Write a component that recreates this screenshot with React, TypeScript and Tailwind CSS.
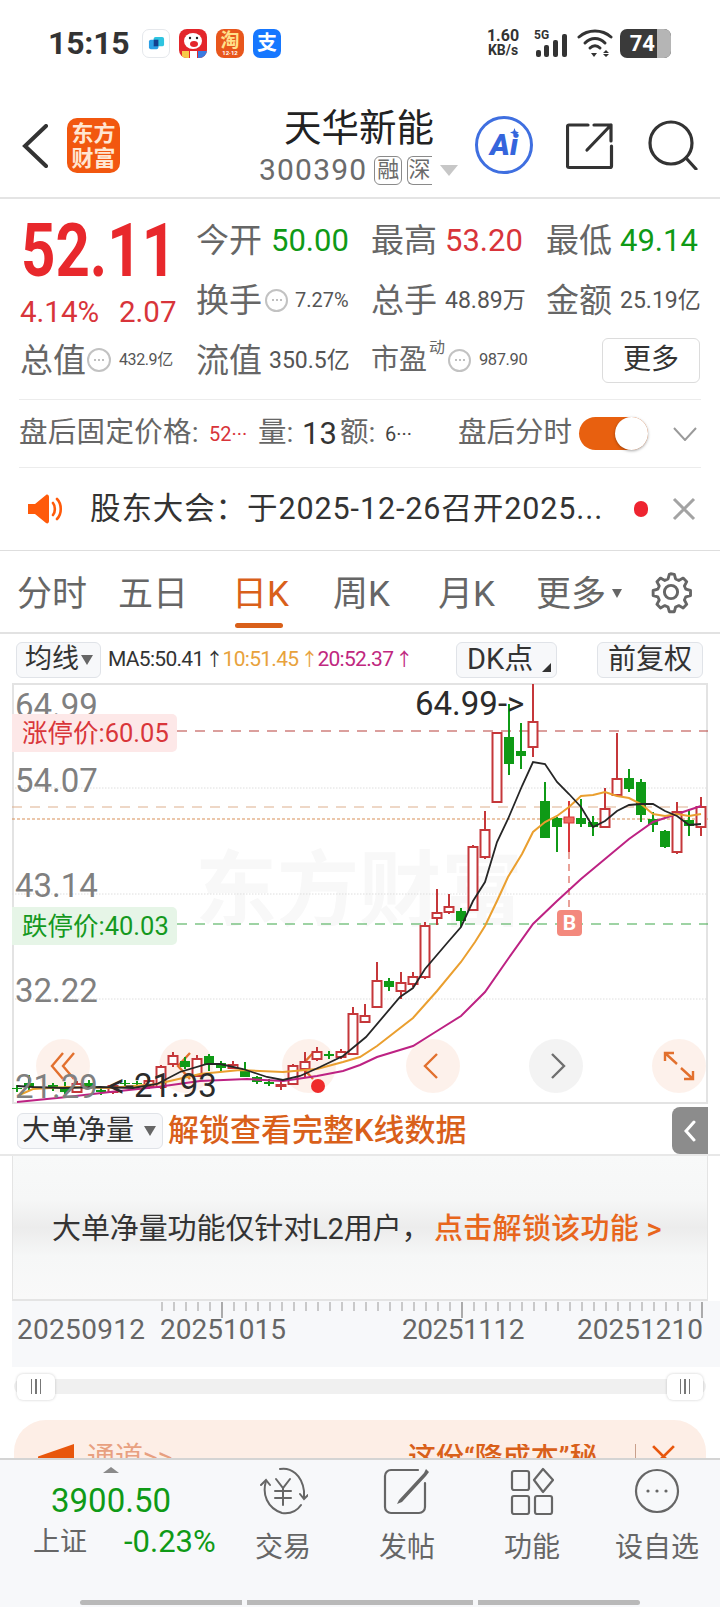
import type { ReactNode } from 'react'

const GREEN = 'text-[#0f9a16]'
const RED = 'text-[#d8343a]'

// x, wickTop, wickBottom, bodyTop, bodyBottom, up
type Candle = [number, number, number, number, number, boolean]

const candles: Candle[] = [
	[17, 1086, 1093, 1089, 1090, false],
	[29, 1076, 1092, 1084, 1088, false],
	[53, 1084, 1092, 1086, 1089, false],
	[65, 1083, 1095, 1089, 1093, false],
	[77, 1082, 1094, 1085, 1093, true],
	[89, 1081, 1090, 1084, 1087, false],
	[101, 1088, 1096, 1091, 1093, false],
	[113, 1085, 1095, 1087, 1093, true],
	[125, 1081, 1088, 1084, 1085, false],
	[137, 1082, 1088, 1084, 1085, false],
	[149, 1078, 1090, 1082, 1088, true],
	[161, 1066, 1090, 1068, 1088, true],
	[173, 1053, 1068, 1057, 1065, true],
	[185, 1058, 1070, 1062, 1068, false],
	[197, 1056, 1077, 1060, 1077, true],
	[209, 1055, 1072, 1057, 1065, false],
	[221, 1062, 1072, 1064, 1069, false],
	[233, 1062, 1070, 1066, 1069, true],
	[245, 1063, 1078, 1072, 1078, false],
	[257, 1077, 1085, 1078, 1083, false],
	[269, 1080, 1087, 1083, 1085, false],
	[281, 1082, 1091, 1086, 1087, true],
	[293, 1065, 1086, 1067, 1085, true],
	[305, 1053, 1078, 1063, 1070, true],
	[317, 1048, 1062, 1053, 1060, true],
	[329, 1052, 1060, 1055, 1057, false],
	[341, 1050, 1060, 1053, 1058, true],
	[353, 1008, 1055, 1015, 1055, true],
	[365, 1005, 1023, 1017, 1023, true],
	[377, 963, 1008, 982, 1008, true],
	[389, 979, 992, 982, 988, false],
	[401, 973, 1000, 984, 992, true],
	[413, 973, 988, 978, 985, true],
	[425, 923, 980, 927, 978, true],
	[437, 890, 926, 914, 919, true],
	[449, 895, 915, 908, 913, true],
	[461, 909, 928, 912, 922, false],
	[473, 846, 912, 848, 911, true],
	[485, 812, 860, 831, 858, true],
	[497, 734, 803, 734, 803, true],
	[509, 705, 776, 738, 765, false],
	[521, 724, 770, 752, 757, false],
	[533, 685, 758, 723, 748, true],
	[545, 783, 839, 802, 839, false],
	[557, 818, 853, 819, 828, false],
	[581, 800, 828, 819, 825, false],
	[593, 817, 837, 823, 828, false],
	[605, 789, 828, 810, 828, true],
	[617, 734, 797, 780, 796, true],
	[629, 770, 793, 779, 790, false],
	[641, 780, 823, 783, 816, false],
	[653, 813, 833, 820, 826, false],
	[665, 831, 849, 832, 848, false],
	[677, 803, 855, 813, 853, true],
	[689, 810, 837, 821, 827, false],
	[701, 798, 837, 808, 828, true],
]

const ma5 =
	'17,1087 33,1088 63,1089 100,1088 133,1089 157,1085 180,1073 207,1065 220,1065 243,1070 267,1078 283,1081 300,1077 320,1068 343,1057 360,1043 366,1038 400,998 413,989 425,970 448,943 461,928 473,902 485,883 497,843 508,820 522,787 533,763 545,765 557,783 569,795 581,808 593,828 605,822 617,812 629,806 641,805 653,805 665,812 677,817 689,826 701,825'
const ma10 =
	'17,1097 33,1090 67,1088 110,1089 157,1085 200,1075 240,1071 283,1073 317,1070 343,1063 360,1058 377,1047 413,1019 437,992 461,963 475,943 485,927 497,902 508,878 522,855 533,833 545,823 557,817 569,808 581,797 593,796 605,793 617,797 629,799 641,805 653,815 665,817 677,815 689,817 701,815'
const ma20 =
	'17,1103 67,1098 110,1093 157,1088 200,1082 247,1080 283,1082 317,1077 343,1072 360,1066 377,1058 413,1047 437,1032 461,1017 485,993 508,960 533,925 557,902 581,880 605,860 629,840 653,823 677,815 701,807'

const Circle = ({ x, gray, children }: { x: number; gray?: boolean; children: ReactNode }) => (
	<g>
		<circle cx={x} cy={1067} r={27} fill={gray ? '#f1f1f1' : '#fdefe8'} fillOpacity={0.85} />
		<g
			transform={`translate(${x} 1067)`}
			fill="none"
			stroke={gray ? '#6f6f6f' : '#e2702e'}
			strokeWidth={2.4}
		>
			{children}
		</g>
	</g>
)

const DotsBadge = ({ className }: { className: string }) => (
	<span
		className={`flex items-center justify-center rounded-full border-2 border-[#c2c2c2] text-[#a8a8a8] ${className}`}
	>
		<svg viewBox="0 0 12 4" className="w-[12px] h-[4px]">
			<circle cx="2" cy="2" r="1" fill="#aaa" />
			<circle cx="6" cy="2" r="1" fill="#aaa" />
			<circle cx="10" cy="2" r="1" fill="#aaa" />
		</svg>
	</span>
)

const StatusBar = () => (
	<div className="h-[85px] flex items-center pl-[48px] pt-[1px]">
		<span className="text-[32px] font-bold text-[#333] w-[94px] leading-none tracking-[-0.2px]">15:15</span>
		<div className="flex gap-[9px]">
			<div className="w-[28px] h-[29px] rounded-[7px] border border-[#e5e8ec] bg-white flex items-center justify-center">
				<svg viewBox="0 0 18 18" className="w-[17px] h-[17px]">
					<rect x="1" y="5" width="10" height="10" rx="2" fill="#2a9fe6" />
					<rect x="6" y="2" width="11" height="10" rx="2" fill="#2ec4e0" />
					<rect x="6" y="5" width="5" height="7" fill="#123f8f" />
				</svg>
			</div>
			<div className="w-[28px] h-[29px] rounded-[8px] bg-[#e3262b] flex items-center justify-center overflow-hidden">
				<svg viewBox="0 0 28 29" className="w-[28px] h-[29px]">
					<ellipse cx="14" cy="12" rx="9" ry="8" fill="#fff" />
					<ellipse cx="15" cy="15" rx="4" ry="3" fill="#e3262b" />
					<circle cx="11" cy="9" r="1.2" fill="#222" />
					<circle cx="18" cy="9" r="1.2" fill="#222" />
					<rect x="3" y="22" width="7" height="7" fill="#f7c948" />
					<rect x="11" y="22" width="7" height="7" fill="#fff" />
					<rect x="19" y="22" width="9" height="7" fill="#3a7be0" />
				</svg>
			</div>
			<div className="w-[28px] h-[29px] rounded-[8px] bg-[#e8561c] flex flex-col items-center justify-center text-[#ffe08a] font-bold leading-none">
				<span className="text-[19px]">淘</span>
				<span className="text-[6px] text-white">12·12</span>
			</div>
			<div className="w-[28px] h-[29px] rounded-[7px] bg-[#1677ff] flex items-center justify-center text-white text-[20px] font-bold leading-none">
				支
			</div>
		</div>
		<div className="ml-[203px] w-[38px] flex flex-col items-center text-[#333] font-bold leading-[15px]">
			<span className="text-[16px]">1.60</span>
			<span className="text-[14px]">KB/s</span>
		</div>
		<svg viewBox="0 0 36 30" className="ml-[12px] w-[36px] h-[30px]">
			<text x="0" y="11" fontSize="12" fontWeight="700" fill="#333" fontFamily="Roboto">5G</text>
			<rect x="2" y="22" width="5" height="7" rx="2" fill="#333" />
			<rect x="10" y="17" width="5" height="12" rx="2" fill="#333" />
			<rect x="19" y="12" width="5" height="17" rx="2" fill="#333" />
			<rect x="28" y="6" width="5" height="23" rx="2" fill="#333" />
		</svg>
		<svg viewBox="0 0 36 30" fill="none" stroke="#333" strokeWidth="3" strokeLinecap="round" className="ml-[7px] w-[36px] h-[30px]">
			<path d="M2 9 C11 1 25 1 34 9" />
			<path d="M8 15 C14 9 22 9 28 15" />
			<path d="M13 20 C16 17 20 17 23 20" />
			<path d="M14 25 h6 l-3 4 z" fill="#333" stroke="none" />
			<path d="M29 22 l3 3 h-6 z M26 26 h6 l-3 3 z" fill="#333" stroke="none" />
		</svg>
		<div className="ml-[7px] w-[51px] h-[29px] rounded-[7px] bg-[#3a3a3a] overflow-hidden flex">
			<span className="w-[35px] text-white font-bold text-[22px] leading-[29px] text-right">74</span>
			<span className="ml-[2px] flex-1 bg-[#b5b5b5]" />
		</div>
	</div>
)

const Header = () => (
	<div className="h-[114px] border-b-[2px] border-[#e4e4e4] flex items-start">
		<svg viewBox="0 0 28 44" fill="none" stroke="#333" strokeWidth="4" strokeLinecap="round" className="ml-[21px] mt-[39px] w-[28px] h-[44px]">
			<path d="M25 2 L4 22 L25 42" />
		</svg>
		<div className="ml-[18px] mt-[33px] w-[53px] h-[55px] rounded-[10px] bg-[#f2570f] flex flex-col items-center justify-center text-[#ffe6d2] font-bold text-[22px] leading-[25px]">
			<span>东方</span>
			<span>财富</span>
		</div>
		<div className="ml-[139px] w-[187px] shrink-0 flex flex-col">
			<span className="ml-[25px] mt-[21px] text-[37.5px] leading-[44px] text-[#222] whitespace-nowrap">天华新能</span>
			<div className="mt-[4px] flex items-center text-[#6b6b6b]">
				<span className="shrink-0 text-[30px] leading-[32px] tracking-[1.2px]">300390</span>
				<span className="shrink-0 ml-[7px] w-[28px] h-[29px] rounded-[6px] border border-[#8a8a8a] text-[22px] leading-[26px] text-center">融</span>
				<span className="shrink-0 ml-[5px] w-[25px] h-[29px] rounded-l-[6px] border-y border-l border-[#8a8a8a] text-[22px] leading-[26px] whitespace-nowrap">深</span>
				<span className="shrink-0 ml-[8px] w-0 h-0 border-x-[9px] border-x-transparent border-t-[11px] border-t-[#c7c7c7]" />
			</div>
		</div>
		<div className="ml-[29px] mt-[31px] w-[58px] h-[58px] shrink-0 rounded-full border-[3px] border-[#3f6fe0] relative flex items-center justify-center text-[#3565dc] font-black italic text-[30px] leading-none">
			Ai
			<svg viewBox="0 0 10 10" className="absolute right-[11px] top-[9px] w-[9px] h-[9px]">
				<path d="M5 0 L6.3 3.7 L10 5 L6.3 6.3 L5 10 L3.7 6.3 L0 5 L3.7 3.7 Z" fill="#3565dc" />
			</svg>
		</div>
		<svg viewBox="0 0 48 48" fill="none" stroke="#333" strokeWidth="3.2" strokeLinecap="round" strokeLinejoin="round" className="ml-[33px] mt-[37px] w-[48px] h-[48px]">
			<path d="M22 3 H3 a1.5 1.5 0 0 0 -1.5 1.5 V44 a1.5 1.5 0 0 0 1.5 1.5 H44 a1.5 1.5 0 0 0 1.5 -1.5 V24" />
			<path d="M21 28 L45 3 M28 3 H45 V19" />
		</svg>
		<svg viewBox="0 0 50 50" fill="none" stroke="#333" strokeWidth="3.2" strokeLinecap="round" className="ml-[34px] mt-[35px] w-[50px] h-[50px]">
			<circle cx="23" cy="23" r="21" />
			<path d="M38 38 L48 49" />
		</svg>
	</div>
)

const Label = ({ children }: { children: ReactNode }) => (
	<span className="text-[33px] leading-none text-[#666] w-[66px] shrink-0">{children}</span>
)

const Quote = () => (
	<div className="h-[200px] pt-[11px]">
		<div className="pl-[22px] grid grid-cols-[174px_175px_175px_175px] auto-rows-[60px] items-center">
			<div className="row-span-2 flex flex-col self-start">
				<span className="ml-[-1px] mt-[2px] text-[75px] leading-[76px] font-bold text-[#e8282c] scale-x-[0.8] origin-left">52.11</span>
				<div className="ml-[-2px] mt-[8px] flex text-[29.5px] leading-[32px] text-[#d8343a]">
					<span className="w-[99px]">4.14%</span>
					<span>2.07</span>
				</div>
			</div>
			<div className="flex items-center">
				<Label>今开</Label>
				<span className={`ml-[9px] text-[31px] leading-none ${GREEN}`}>50.00</span>
			</div>
			<div className="flex items-center">
				<Label>最高</Label>
				<span className={`ml-[8px] text-[31px] leading-none ${RED}`}>53.20</span>
			</div>
			<div className="flex items-center">
				<Label>最低</Label>
				<span className={`ml-[8px] text-[31px] leading-none ${GREEN}`}>49.14</span>
			</div>
			<div className="flex items-center">
				<Label>换手</Label>
				<DotsBadge className="ml-[3px] w-[23px] h-[23px]" />
				<span className="ml-[7px] text-[20px] leading-none text-[#555]">7.27%</span>
			</div>
			<div className="flex items-center">
				<Label>总手</Label>
				<span className="ml-[8px] text-[23px] leading-none text-[#555]">48.89万</span>
			</div>
			<div className="flex items-center">
				<Label>金额</Label>
				<span className="ml-[8px] text-[23px] leading-none text-[#555]">25.19亿</span>
			</div>
			<div className="flex items-center ml-[-2px]">
				<Label>总值</Label>
				<DotsBadge className="ml-[1px] w-[24px] h-[24px]" />
				<span className="ml-[8px] text-[16px] leading-none text-[#555] tracking-[-0.4px]">432.9亿</span>
			</div>
			<div className="flex items-center">
				<Label>流值</Label>
				<span className="ml-[7px] text-[23px] leading-none text-[#555]">350.5亿</span>
			</div>
			<div className="flex items-center">
				<span className="text-[28px] leading-none text-[#666] w-[56px]">市盈</span>
				<span className="mt-[-24px] ml-[2px] w-[17px] text-[16px] leading-none text-[#666]">动</span>
				<DotsBadge className="ml-[2px] w-[23px] h-[23px]" />
				<span className="ml-[8px] text-[16.5px] leading-none text-[#555] tracking-[-0.4px]">987.90</span>
			</div>
			<div className="flex items-center">
				<button className="ml-[56px] w-[98px] h-[45px] rounded-[6px] border border-[#dcdcdc] text-[28px] leading-none text-[#333]">更多</button>
			</div>
		</div>
	</div>
)

const AfterHours = () => (
	<div className="mx-[19px] h-[69px] border-y-[1px] border-[#ececec] flex items-center text-[#666] text-[28.5px] leading-none">
		<span className="w-[190px] shrink-0 whitespace-nowrap tracking-[0.3px]">盘后固定价格:</span>
		<span className="text-[20px] text-[#d8343a] w-[49px] shrink-0">52···</span>
		<span className="w-[44px] shrink-0">量:</span>
		<span className="text-[31px] text-[#333] w-[38px] shrink-0">13</span>
		<span className="w-[45px] shrink-0">额:</span>
		<span className="text-[20px] text-[#444] w-[73px] shrink-0">6···</span>
		<span className="w-[121px] shrink-0 whitespace-nowrap">盘后分时</span>
		<div className="w-[69px] h-[33px] rounded-full bg-[#e8600f] flex items-center justify-end shrink-0 relative">
			<span className="w-[33px] h-[33px] rounded-full bg-white shadow-[0_1px_3px_rgba(0,0,0,0.35)]" />
		</div>
		<svg viewBox="0 0 24 14" fill="none" stroke="#9a9a9a" strokeWidth="2" className="ml-[25px] w-[24px] h-[14px]">
			<path d="M1 1 L12 13 L23 1" />
		</svg>
	</div>
)

const Notice = () => (
	<div className="h-[83px] border-b-[1px] border-[#dedede] flex items-center">
		<svg viewBox="0 0 36 30" className="ml-[27px] w-[36px] h-[30px]">
			<path d="M1 10 H8 L19 1 C20.5 0 22 1 22 3 V27 C22 29 20.5 30 19 29 L8 20 H1 Z" fill="#ff5a0a" />
			<path d="M26 9 C28.5 12 28.5 18 26 21 M30 5 C35 10 35 20 30 25" fill="none" stroke="#ff5a0a" strokeWidth="2.6" strokeLinecap="round" />
		</svg>
		<span className="ml-[27px] w-[544px] text-[30.5px] leading-none text-[#333] tracking-[0.9px] whitespace-nowrap">股东大会：于2025-12-26召开2025...</span>
		<span className="w-[14px] h-[16px] rounded-full bg-[#ee2430]" />
		<svg viewBox="0 0 24 24" fill="none" stroke="#a3a3a3" strokeWidth="3" className="ml-[24px] w-[24px] h-[24px]">
			<path d="M2 2 L22 22 M22 2 L2 22" />
		</svg>
	</div>
)

const Tabs = () => (
	<div className="h-[83px] pt-[5px] border-b-[2px] border-[#e2e2e2] flex items-center text-[35px] leading-none text-[#666] relative">
		<span className="ml-[17px] w-[101px]">分时</span>
		<span className="w-[114px]">五日</span>
		<span className="w-[101px] text-[#d9601a]">日K</span>
		<span className="w-[105px]">周K</span>
		<span className="w-[98px]">月K</span>
		<span className="w-[76px]">更多</span>
		<span className="w-0 h-0 border-x-[5px] border-x-transparent border-t-[9px] border-t-[#666] mt-[-2px]" />
		<svg viewBox="0 0 24 24" fill="none" stroke="#666" strokeWidth="1.6" className="ml-[27px] w-[44px] h-[44px] mt-[-4px]">
			<path d="M12 1.8 l2 .3 .7 2.6 1.8 .8 2.4-1.3 2 2 -1.3 2.4 .8 1.8 2.6.7 v2.8 l-2.6.7 -.8 1.8 1.3 2.4 -2 2 -2.4-1.3 -1.8.8 -.7 2.6 h-2.8 l-.7-2.6 -1.8-.8 -2.4 1.3 -2-2 1.3-2.4 -.8-1.8 -2.6-.7 v-2.8 l2.6-.7 .8-1.8 -1.3-2.4 2-2 2.4 1.3 1.8-.8 .7-2.6 z" strokeLinejoin="round" transform="translate(0.1 0.3) scale(.98)" />
			<circle cx="12" cy="12" r="3.6" />
		</svg>
		<span className="absolute left-[235px] bottom-[4px] w-[48px] h-[5px] rounded-full bg-[#d9601a]" />
	</div>
)

const MaRow = () => (
	<div className="h-[49px] pt-[2px] flex items-center">
		<div className="ml-[16px] w-[85px] h-[36px] rounded-[6px] border border-[#e0e3e8] bg-[#f7f8fa] flex items-center pl-[8px] text-[27px] leading-none text-[#333]">
			均线
			<span className="ml-[2px] w-0 h-0 border-x-[6px] border-x-transparent border-t-[10px] border-t-[#666]" />
		</div>
		<div className="ml-[7px] w-[348px] flex items-center text-[21px] leading-none tracking-[-0.7px] whitespace-nowrap">
			<span className="text-[#333]">MA5:50.41</span>
			<span className="ml-[2px] w-[17px] text-[18px] text-[#333]">↑</span>
			<span className="text-[#e8a23c]">10:51.45</span>
			<span className="ml-[2px] w-[17px] text-[18px] text-[#e8a23c]">↑</span>
			<span className="text-[#c0287f]">20:52.37</span>
			<span className="ml-[2px] text-[18px] text-[#c0287f]">↑</span>
		</div>
		<div className="w-[101px] h-[36px] rounded-[6px] border border-[#e0e3e8] bg-[#f7f8fa] flex items-center pl-[10px] text-[29px] leading-none text-[#333] relative">
			DK点
			<span className="absolute right-[5px] bottom-[5px] w-0 h-0 border-l-[9px] border-l-transparent border-b-[9px] border-b-[#333]" />
		</div>
		<div className="ml-[40px] w-[106px] h-[36px] rounded-[6px] border border-[#e0e3e8] bg-[#f7f8fa] flex items-center justify-center text-[28px] leading-none text-[#333]">
			前复权
		</div>
	</div>
)

const Chart = () => (
	<div className="relative mx-[12px] h-[421px] w-[696px] border-2 border-[#e3e3e3] bg-white">
		{/* watermark */}
		<span className="absolute left-[181px] top-[165px] text-[82px] leading-none font-bold text-[#f8f8f8] whitespace-nowrap">东方财富</span>
		<svg viewBox="12 684 696 421" className="absolute left-[-2px] top-[-2px] w-[696px] h-[421px]">
			{[789, 895, 1000].map((y) => (
				<line key={y} x1="12" x2="708" y1={y} y2={y} stroke="#dedede" strokeWidth="1" strokeDasharray="1.5 1.5" />
			))}
			<line x1="177" x2="708" y1="732" y2="732" stroke="#b8403c" strokeWidth="1.2" strokeDasharray="10 8" />
			<line x1="177" x2="708" y1="925" y2="925" stroke="#3fa84a" strokeWidth="1.2" strokeDasharray="10 8" />
			<line x1="12" x2="708" y1="808" y2="808" stroke="#deb08e" strokeWidth="1.2" strokeDasharray="10 8" />
			<line x1="12" x2="708" y1="820" y2="820" stroke="#d88f58" strokeWidth="1.2" strokeDasharray="3 2" />
			<Circle x={63}>
				<path d="M-3 -13 L-14 0 L-3 13 M8 -13 L-3 0 L8 13" transform="translate(3 0)" />
			</Circle>
			<Circle x={186}>
				<path d="M4 -13 L-8 0 L4 13" />
			</Circle>
			<Circle x={309}>
				<path d="M4 -13 L-8 0 L4 13" />
			</Circle>
			<Circle x={433}>
				<path d="M4 -12 L-8 0 L4 12" />
			</Circle>
			<Circle x={556} gray>
				<path d="M-4 -12 L8 0 L-4 12" />
			</Circle>
			<Circle x={679}>
				<path d="M-14 -13 L-2 -2 M-14 -5 V-13 H-5 M14 13 L2 2 M14 5 V13 H5" />
			</Circle>
			<line x1="569" x2="569" y1="853" y2="911" stroke="#e07a6e" strokeWidth="1.4" strokeDasharray="7 5" />
			{candles.map(([x, wt, wb, bt, bb, up]) => (
				<g key={x}>
					<line x1={x} x2={x} y1={wt} y2={wb} stroke={up ? '#c5373a' : '#0f9a16'} strokeWidth="2" />
					{up ? (
						<rect x={x - 4.5} y={bt} width={9} height={bb - bt} fill="#fff" stroke="#c5373a" strokeWidth="2" />
					) : (
						<rect x={x - 5} y={bt} width={10} height={Math.max(bb - bt, 1)} fill="#0f9a16" />
					)}
				</g>
			))}
			{/* B day candle */}
			<line x1="569" x2="569" y1="802" y2="853" stroke="#d9363a" strokeWidth="2" />
			<rect x="564" y="818" width="10" height="6" fill="#ef6b61" stroke="#d9363a" strokeWidth="1" />
			<polyline points={ma20} fill="none" stroke="#bd2283" strokeWidth="2" />
			<polyline points={ma10} fill="none" stroke="#ea9f2f" strokeWidth="2" />
			<polyline points={ma5} fill="none" stroke="#262626" strokeWidth="1.8" />
			<circle cx="318" cy="1087" r="7" fill="#ef2b2b" />
			<rect x="557" y="911" width="25" height="26" rx="4" fill="#f3897d" />
		</svg>
		<span className="absolute left-[543px] top-[225px] w-[25px] text-center text-[21px] leading-[26px] font-bold text-white">B</span>
		<span className="absolute left-[1px] top-[3px] text-[33px] leading-[36px] text-[#808080]">64.99</span>
		<span className="absolute left-[1px] top-[78px] text-[33px] leading-[36px] text-[#808080]">54.07</span>
		<span className="absolute left-[1px] top-[183px] text-[33px] leading-[36px] text-[#808080]">43.14</span>
		<span className="absolute left-[1px] top-[288px] text-[33px] leading-[36px] text-[#808080]">32.22</span>
		<span className="absolute left-[1px] top-[386px] text-[33px] leading-[31px] text-[#808080]">21.29</span>
		<span className="absolute left-[94px] top-[384px] text-[33px] leading-[33px] text-[#2b2b2b] whitespace-nowrap">&lt;-21.93</span>
		<span className="absolute left-[401px] top-[1px] text-[33px] leading-[36px] text-[#2b2b2b] whitespace-nowrap">64.99-&gt;</span>
		<span className="absolute left-[-2px] top-[29px] w-[165px] h-[38px] rounded-r-[5px] bg-[#fde8e8] text-[#d9363a] text-[25.5px] leading-[38px] pl-[10px] whitespace-nowrap">涨停价:60.05</span>
		<span className="absolute left-[-2px] top-[222px] w-[165px] h-[38px] rounded-r-[5px] bg-[#e6f5e7] text-[#15991f] text-[25.5px] leading-[38px] pl-[10px] whitespace-nowrap">跌停价:40.03</span>
	</div>
)

const Locked = () => (
	<div>
		<div className="h-[52px] pt-[3px] flex items-center border-b-[2px] border-[#e8e8e8] relative">
			<div className="ml-[17px] w-[146px] h-[36px] rounded-[6px] border border-[#e0e3e8] bg-[#f7f8fa] flex items-center pl-[4px] text-[28px] leading-none text-[#333]">
				大单净量
				<span className="ml-[10px] w-0 h-0 border-x-[6px] border-x-transparent border-t-[10px] border-t-[#666]" />
			</div>
			<span className="ml-[5px] text-[31px] leading-none font-medium text-[#d9601a]">解锁查看完整K线数据</span>
			<div className="absolute right-[12px] top-[3px] w-[36px] h-[47px] rounded-l-[8px] bg-[#8c8c8c] flex items-center justify-center">
				<svg viewBox="0 0 12 22" fill="none" stroke="#fff" strokeWidth="3" strokeLinecap="round" className="w-[12px] h-[22px]">
					<path d="M10 2 L2 11 L10 20" />
				</svg>
			</div>
		</div>
		<div className="mx-[12px] h-[145px] border-x border-b-[2px] border-[#e4e4e4] bg-[linear-gradient(to_bottom,#f8f9f9_0%,#f6f7f7_30%,#ececec_50%,#f6f7f7_70%,#f9f9f9_100%)] flex items-center text-[29px] leading-none pt-[3px]">
			<span className="ml-[39px] w-[382px] text-[#333] whitespace-nowrap tracking-[-0.1px]">大单净量功能仅针对L2用户，</span>
			<span className="font-medium text-[#e8661c] whitespace-nowrap tracking-[0.3px]">点击解锁该功能 &gt;</span>
		</div>
		<div className="ml-[12px] h-[66px] bg-[#f7f8fa] relative">
			<svg viewBox="12 1300 708 20" className="w-[708px] h-[20px] block">
				{Array.from({ length: 46 }, (_, i) => 162 + i * 12).map((x) => (
					<line key={x} x1={x} x2={x} y1="1301" y2={(x - 222) % 240 === 0 ? 1317 : 1310} stroke={(x - 222) % 240 === 0 ? '#777' : '#aaa'} strokeWidth="1.2" />
				))}
			</svg>
			<div className="flex text-[28px] leading-none text-[#666] mt-[-5px] whitespace-nowrap">
				<span className="ml-[5px] w-[143px] tracking-[0.3px]">20250912</span>
				<span className="w-[242px]">20251015</span>
				<span className="w-[175px] tracking-[-0.5px]">20251112</span>
				<span>20251210</span>
			</div>
		</div>
		<div className="mt-[12px] mx-[14px] h-[15px] bg-[#f0f0f0] rounded-full flex items-center justify-between px-[3px]">
			<div className="w-[38px] h-[26px] rounded-[6px] bg-white shadow-[0_0_3px_rgba(0,0,0,0.2)] flex items-center justify-center gap-[3px]">
				<i className="w-[1.5px] h-[15px] bg-[#777]" />
				<i className="w-[1.5px] h-[15px] bg-[#777]" />
				<i className="w-[1.5px] h-[15px] bg-[#777]" />
			</div>
			<div className="w-[36px] h-[26px] rounded-[6px] bg-white shadow-[0_0_3px_rgba(0,0,0,0.2)] flex items-center justify-center gap-[3px]">
				<i className="w-[1.5px] h-[15px] bg-[#777]" />
				<i className="w-[1.5px] h-[15px] bg-[#777]" />
				<i className="w-[1.5px] h-[15px] bg-[#777]" />
			</div>
		</div>
	</div>
)

const Promo = () => (
	<div className="h-[64px] pt-[26px] overflow-hidden">
		<div className="mx-[14px] h-[80px] rounded-t-[32px] bg-[#fdeee6] flex items-start pt-[24px] text-[28px] leading-none">
			<span className="ml-[24px] w-[36px] h-[36px] bg-[#e8560c] [clip-path:polygon(0_35%,100%_0,100%_100%,0_100%)]" />
			<span className="ml-[13px] w-[321px] text-[#e8a080] whitespace-nowrap">通道&gt;&gt;</span>
			<span className="w-[210px] font-medium text-[#d9601a] whitespace-nowrap overflow-hidden">这份“降成本”秘</span>
			<span className="ml-[17px] w-[1px] h-[28px] bg-[#c9a08c]" />
			<svg viewBox="0 0 24 24" fill="none" stroke="#e8560c" strokeWidth="2.6" className="ml-[15px] w-[25px] h-[25px]">
				<path d="M2 2 L22 22 M22 2 L2 22" />
			</svg>
		</div>
	</div>
)

const NavItem = ({ label, children, className }: { label: string; children: ReactNode; className: string }) => (
	<div className={`flex flex-col items-center shrink-0 ${className}`}>
		<div className="w-[50px] h-[48px] flex items-center justify-center">{children}</div>
		<span className="mt-[19px] text-[28px] leading-none text-[#666] whitespace-nowrap">{label}</span>
	</div>
)

const BottomBar = () => (
	<div className="h-[149px] bg-[#f7f8fa] border-t-[2px] border-[#d4d4d4] relative">
		<div className="flex pt-[7px]">
			<div className="w-[222px] shrink-0 flex flex-col items-center relative">
				<span className="w-0 h-0 border-x-[8px] border-x-transparent border-b-[6px] border-b-[#8a8a8a]" />
				<span className={`mt-[10px] text-[33px] leading-[36px] ${GREEN}`}>3900.50</span>
				<div className="mt-[5px] flex items-center self-start ml-[33px]">
					<span className="w-[91px] text-[27px] leading-[36px] text-[#666]">上证</span>
					<span className={`text-[31px] leading-[36px] whitespace-nowrap ${GREEN}`}>-0.23%</span>
				</div>
			</div>
			<NavItem label="交易" className="ml-[21px] w-[80px]">
				<svg viewBox="0 0 50 48" fill="none" stroke="#666" strokeWidth="2" strokeLinecap="round" className="w-[50px] h-[48px]">
					<path d="M8 14 C4 27 9 41 24 46 C32 47 39 44 43 38" />
					<path d="M22 2 C33 0 44 8 46 24 L46 31" />
					<path d="M3 18 L8 13 L12 18 M42 27 L46 32 L50 28" />
					<path d="M18 12 L25 21 L32 12 M17 24 H33 M17 31 H33 M25 21 V38" />
				</svg>
			</NavItem>
			<NavItem label="发帖" className="ml-[44px] w-[80px]">
				<svg viewBox="0 0 50 48" fill="none" stroke="#666" strokeWidth="2.2" strokeLinecap="round" className="w-[50px] h-[48px]">
					<path d="M36 3 H9 a6 6 0 0 0 -6 6 V40 a6 6 0 0 0 6 6 H37 a6 6 0 0 0 6 -6 V16" />
					<path d="M17 33 L42 6 L44 2 L47 5 L44 9 L20 35 L15 37 Z" fill="#666" stroke="none" />
				</svg>
			</NavItem>
			<NavItem label="功能" className="ml-[45px] w-[80px]">
				<svg viewBox="0 0 44 48" fill="none" stroke="#666" strokeWidth="2.2" strokeLinejoin="round" className="w-[44px] h-[48px]">
					<rect x="2" y="4" width="17" height="19" rx="2" />
					<rect x="2" y="29" width="17" height="18" rx="2" />
					<rect x="25" y="29" width="17" height="18" rx="2" />
					<path d="M33 2 L43 13 L33 25 L24 13 Z" />
				</svg>
			</NavItem>
			<NavItem label="设自选" className="ml-[43px] w-[84px]">
				<svg viewBox="0 0 46 48" fill="none" stroke="#666" strokeWidth="2.2" className="w-[46px] h-[48px]">
					<circle cx="23" cy="24" r="21" />
					<circle cx="14" cy="24" r="1.6" fill="#666" stroke="none" />
					<circle cx="23" cy="24" r="1.6" fill="#666" stroke="none" />
					<circle cx="32" cy="24" r="1.6" fill="#666" stroke="none" />
				</svg>
			</NavItem>
		</div>
		<div className="absolute bottom-[2px] left-[80px] flex gap-[5px]">
			<span className="w-[162px] h-[5px] rounded-l-full bg-[#b9b9b9]" />
			<span className="w-[226px] h-[5px] bg-[#b9b9b9]" />
			<span className="w-[162px] h-[5px] rounded-r-full bg-[#b9b9b9]" />
		</div>
	</div>
)

export default function App() {
	return (
		<div className="w-[720px] h-[1608px] overflow-hidden bg-white font-['Roboto','Noto_Sans_CJK_SC',sans-serif]">
			<StatusBar />
			<Header />
			<Quote />
			<AfterHours />
			<Notice />
			<Tabs />
			<MaRow />
			<Chart />
			<Locked />
			<Promo />
			<BottomBar />
		</div>
	)
}
